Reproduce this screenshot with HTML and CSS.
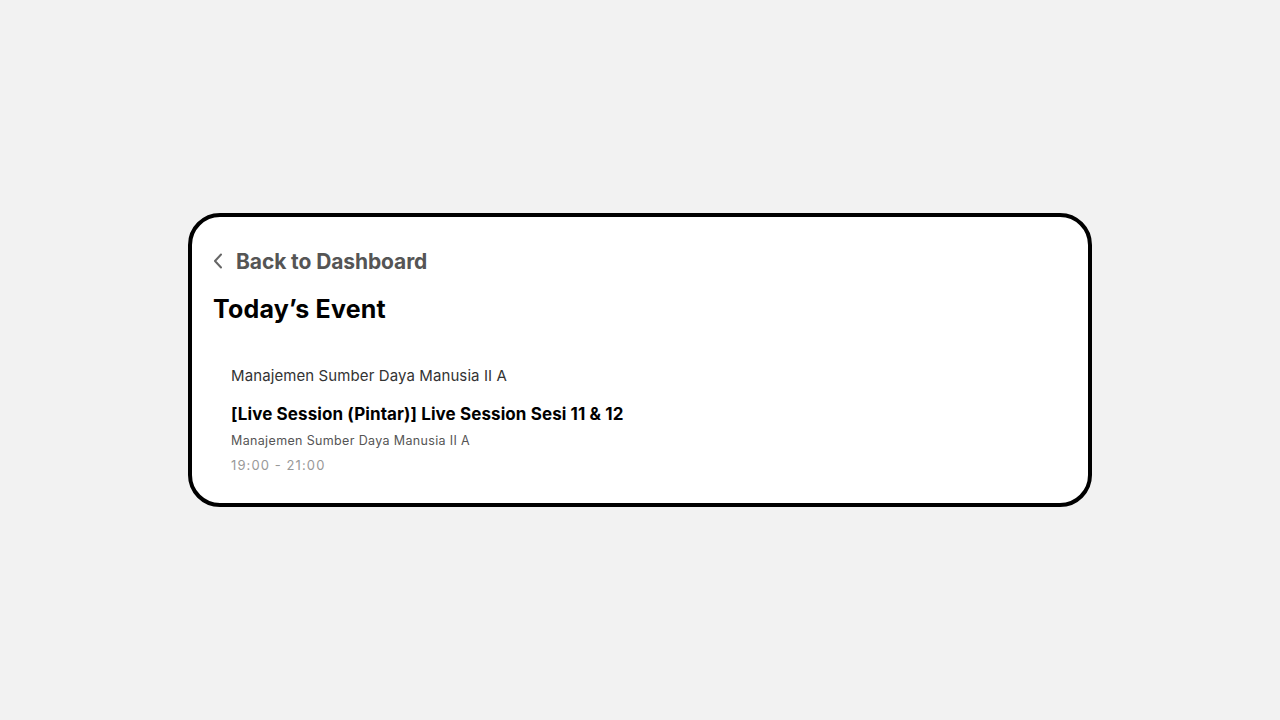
FILE: index.html
```html
<!DOCTYPE html>
<html>
<head>
<meta charset="utf-8">
<link rel="stylesheet" href="styles.css">
</head>
<body>
<div class="page">
  <div class="card">
    <a class="back" href="#">
      <svg class="chev" width="10" height="16" viewBox="0 0 10 16"><path d="M8 1.5 L2 8 L8 14.5" fill="none" stroke="#666" stroke-width="2" stroke-linecap="round" stroke-linejoin="round"/></svg>
      <span>Back to Dashboard</span>
    </a>
    <h1 class="heading">Today’s Event</h1>
    <div class="events">
      <div class="course">Manajemen Sumber Daya Manusia II A</div>
      <div class="event">
        <div class="event-title">[Live Session (Pintar)] Live Session Sesi 11 &amp; 12</div>
        <div class="event-course">Manajemen Sumber Daya Manusia II A</div>
        <div class="event-time">19:00 - 21:00</div>
      </div>
    </div>
  </div>
</div>
</body>
</html>
```
FILE: styles.css
```css
html, body {
  margin: 0;
  padding: 0;
  background: #f2f2f2;
  font-family: Inter, "Noto Sans", "Liberation Sans", sans-serif;
}
.page {
  width: 1280px;
  height: 720px;
  display: flex;
  align-items: center;
  justify-content: center;
}
.card {
  box-sizing: border-box;
  width: 904px;
  height: 294px;
  background: #fff;
  border: 4px solid #000;
  border-radius: 32px;
  padding: 28px 21px 0 21px;
  display: flex;
  flex-direction: column;
}
.back {
  display: flex;
  align-items: center;
  gap: 13px;
  text-decoration: none;
  color: #555;
  font-size: 21px;
  font-weight: 700;
  height: 32px;
  letter-spacing: -0.1px;
}
.chev {
  display: block;
  margin-top: 0;
}
.heading {
  margin: 15px 0 0 0;
  font-size: 25px;
  font-weight: 700;
  color: #000;
  line-height: 34px;
  letter-spacing: 0.2px;
}
.events {
  padding: 0 0 0 18px;
  margin-top: 40px;
}
.course {
  font-size: 15px;
  color: #333;
  line-height: 20px;
  letter-spacing: 0.1px;
}
.event {
  margin-top: 17px;
}
.event-title {
  font-size: 17px;
  font-weight: 700;
  color: #000;
  line-height: 22px;
  letter-spacing: 0.1px;
}
.event-course {
  font-size: 12.5px;
  color: #555;
  line-height: 18px;
  margin-top: 7px;
  letter-spacing: 0.35px;
}
.event-time {
  font-size: 13px;
  color: #999;
  line-height: 18px;
  margin-top: 6px;
  letter-spacing: 1.1px;
}
```
